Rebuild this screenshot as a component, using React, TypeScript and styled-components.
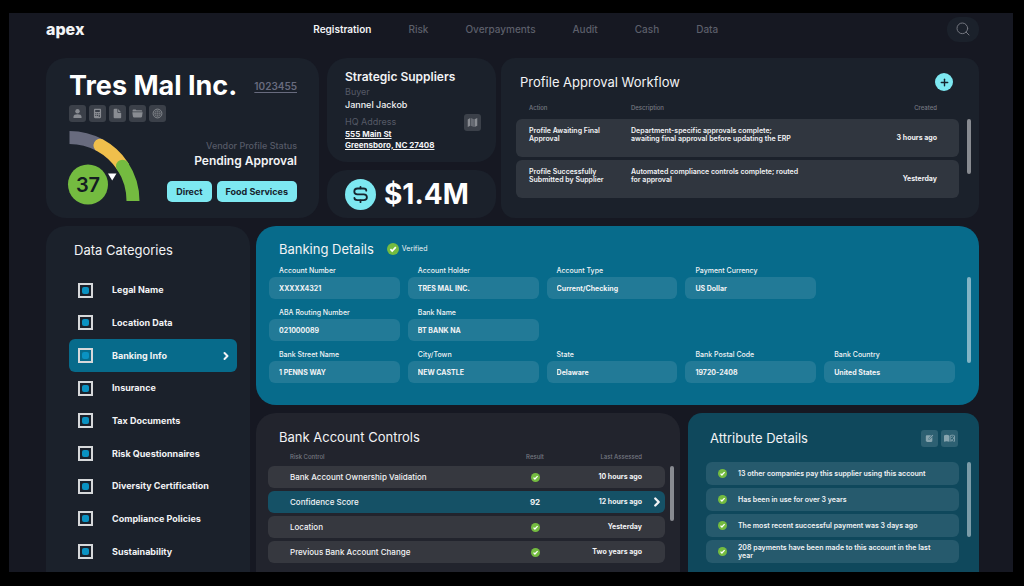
import React from "react";
import styled, { createGlobalStyle } from "styled-components";
import { ChevronRight, Plus, Search } from "lucide-react";

const color = {
  frame: "#161822",
  card: "#1b212b",
  cardAlt: "#22242d",
  row: "#30363f",
  rowAlt: "#36383f",
  teal: "#076b8b",
  tealField: "#227a97",
  tealDeep: "#0f485c",
  tealRow: "#265a6d",
  tealSelected: "#155166",
  cyan: "#7de8f1",
  green: "#74bb40",
  yellow: "#f0bf4c",
  slate: "#686b7e",
  muted: "#565a67",
  text: "#f2f3f5",
};

const GlobalStyle = createGlobalStyle`
  * { box-sizing: border-box; margin: 0; padding: 0; }
  body { background: #000; color: ${color.text}; font-family: Inter, "Liberation Sans", sans-serif; }
  button, input { font: inherit; color: inherit; border: 0; }
  button { cursor: pointer; }
  ul { list-style: none; }
  a { color: inherit; }
`;

const Screen = styled.div`
  height: 100vh;
  padding: 13px 11px 14px 9px;
`;

const Frame = styled.div`
  height: 100%;
  display: flex;
  flex-direction: column;
  overflow: hidden;
  padding: 0 34px 0 37px;
  background: ${color.frame};
`;

/* Header */

const Header = styled.header`
  display: flex;
  flex: none;
  align-items: center;
  justify-content: space-between;
  height: 45px;
  padding-bottom: 13px;
`;

const Logo = styled.a`
  font-size: 16px;
  line-height: 20px;
  font-weight: 800;
  text-decoration: none;
`;

const Nav = styled.nav`
  display: flex;
  gap: 37px;
`;

const NavLink = styled.a<{ $active?: boolean }>`
  font-size: 10px;
  line-height: 14px;
  font-weight: ${(p) => (p.$active ? 600 : 500)};
  color: ${(p) => (p.$active ? color.text : "#5c5f6a")};
  text-decoration: none;
`;

const SearchButton = styled.button`
  display: grid;
  place-items: center;
  width: 32px;
  height: 25px;
  border-radius: 12px;
  background: ${color.card};
  color: #73767f;
`;

/* Shared parts */

const Card = styled.section<{ $bg?: string; $radius?: number; $open?: boolean }>`
  background: ${(p) => p.$bg ?? color.card};
  border-radius: ${(p) => {
    const r = `${p.$radius ?? 20}px`;
    return p.$open ? `${r} ${r} 0 0` : r;
  }};
  min-width: 0;
`;

const CardTitle = styled.h2`
  font-size: 13px;
  line-height: 18px;
  font-weight: 400;
`;

const TitleBar = styled.div`
  display: flex;
  align-items: center;
  justify-content: space-between;
`;

const IconGroup = styled.div`
  display: flex;
  gap: 3px;
`;

const IconButton = styled.button<{ $bg?: string; $fg?: string }>`
  display: grid;
  place-items: center;
  width: 17px;
  height: 17px;
  border-radius: 3px;
  background: ${(p) => p.$bg ?? "#3b4049"};
  color: ${(p) => p.$fg ?? "#898c92"};
`;

const Scrollable = styled.div`
  display: flex;
  gap: 8px;
`;

const ScrollThumb = styled.div<{ $length: number; $top?: number; $bg?: string }>`
  flex: none;
  width: 4px;
  height: ${(p) => p.$length}px;
  margin-top: ${(p) => p.$top ?? 0}px;
  border-radius: 2px;
  background: ${(p) => p.$bg ?? "#888b91"};
`;

/* Top row */

const TopRow = styled.div`
  display: grid;
  flex: none;
  grid-template-columns: 273fr 652fr;
  gap: 8px;
  margin-bottom: 8px;
`;

const TopRight = styled.div`
  display: grid;
  grid-template-columns: 169fr 478fr;
  gap: 5px;
  min-width: 0;
`;

const VendorCard = styled(Card)`
  padding: 12px 22px 13px 23px;
`;

const VendorName = styled.h1`
  font-size: 27px;
  line-height: 32px;
  font-weight: 700;
  color: #fff;
`;

const VendorId = styled.a`
  font-size: 10px;
  line-height: 12px;
  font-weight: 600;
  color: ${color.slate};
  text-underline-offset: 2px;
`;

const VendorIcons = styled(IconGroup)`
  margin: 3px 0 9px;
`;

const VendorBottom = styled.div`
  display: flex;
  align-items: flex-end;
  justify-content: space-between;
`;

const Gauge = styled.svg`
  display: block;
  overflow: visible;
`;

const StatusBlock = styled.div`
  padding-bottom: 3px;
  text-align: right;
`;

const StatusLabel = styled.p`
  font-size: 9px;
  line-height: 12px;
  font-weight: 500;
  color: ${color.muted};
`;

const StatusValue = styled.p`
  margin-bottom: 12px;
  font-size: 12px;
  line-height: 17px;
  font-weight: 600;
`;

const TagRow = styled.div`
  display: flex;
  justify-content: flex-end;
  gap: 5px;
`;

const Tag = styled.button`
  height: 21px;
  padding: 0 9px;
  border-radius: 5px;
  background: ${color.cyan};
  color: #16232d;
  font-size: 9px;
  font-weight: 700;
`;

const SupplierColumn = styled.div`
  display: grid;
  grid-template-rows: 1fr 48px;
  gap: 8px;
  min-width: 0;
`;

const SupplierCard = styled(Card)`
  padding: 10px 15px 8px 18px;
`;

const SupplierTitle = styled.h2`
  font-size: 12px;
  line-height: 17px;
  font-weight: 600;
`;

const SupplierLabel = styled.p`
  font-size: 9px;
  line-height: 14px;
  color: ${color.muted};
`;

const SupplierValue = styled.p`
  margin-bottom: 4px;
  font-size: 9px;
  line-height: 12px;
  font-weight: 500;
`;

const Address = styled.a`
  display: block;
  font-size: 8px;
  line-height: 11px;
  font-weight: 700;
  text-underline-offset: 1px;
`;

const AddressHead = styled.div`
  display: flex;
  align-items: center;
  justify-content: space-between;
  height: 14px;
`;

const SpendCard = styled(Card)`
  display: flex;
  align-items: center;
  gap: 8px;
  padding-left: 18px;
`;

const Spend = styled.p`
  font-size: 28px;
  line-height: 32px;
  font-weight: 700;
  color: #fff;
`;

const WorkflowCard = styled(Card)`
  padding: 15px 8px 12px 15px;
`;

const WorkflowBar = styled(TitleBar)`
  padding: 0 18px 0 4px;
`;

const AddButton = styled.button`
  display: grid;
  place-items: center;
  width: 18px;
  height: 18px;
  border-radius: 50%;
  background: ${color.cyan};
  color: #16232d;
`;

const DataTable = styled.table`
  flex: 1;
  width: 100%;
  border-collapse: separate;
  border-spacing: 0 3px;
  table-layout: fixed;
  text-align: left;

  th {
    font-size: 6px;
    line-height: 8px;
    font-weight: 500;
    color: #767982;
  }
`;

const WorkflowTable = styled(DataTable)`
  th { height: 22px; padding-bottom: 4px; vertical-align: bottom; }
  th:first-child, td:first-child { width: 115px; padding-left: 13px; }
  th:last-child, td:last-child { width: 110px; padding-right: 22px; text-align: right; }
  td {
    height: 38px;
    padding-top: 8px;
    vertical-align: top;
    background: ${color.row};
    font-size: 7px;
    line-height: 8px;
    font-weight: 600;
  }
  td:first-child { border-radius: 6px 0 0 6px; }
  td:last-child { padding-top: 0; vertical-align: middle; border-radius: 0 6px 6px 0; font-weight: 700; }
`;

/* Lower area */

const LowerRow = styled.div`
  display: grid;
  flex: 1;
  grid-template-columns: 204fr 723fr;
  gap: 6px;
  min-height: 0;
`;

const Sidebar = styled(Card)`
  display: flex;
  flex-direction: column;
  padding: 15px 13px 4px 23px;
`;

const SidebarTitle = styled(CardTitle)`
  margin: 0 0 15px 5px;
`;

const CategoryList = styled.ul`
  display: grid;
  flex: 1;
  grid-auto-rows: minmax(32px, 1fr);
`;

const Category = styled.li<{ $selected: boolean }>`
  display: flex;
  border-radius: 6px;
  background: ${(p) => (p.$selected ? color.teal : "transparent")};
`;

const CategoryLabel = styled.label`
  display: flex;
  flex: 1;
  align-items: center;
  gap: 19px;
  padding: 0 5px 0 9px;
  font-size: 9px;
  line-height: 12px;
  font-weight: 700;

  svg { margin-left: auto; }
`;

const Checkbox = styled.input`
  appearance: none;
  display: grid;
  place-items: center;
  width: 15px;
  height: 15px;
  border: 2px solid #d6d8da;

  &:checked::before {
    content: "";
    width: 7px;
    height: 7px;
    border-radius: 2px;
    background: #0a92c2;
  }
`;

const Panels = styled.div`
  display: flex;
  flex-direction: column;
  gap: 8px;
  min-width: 0;
  min-height: 0;
`;

const BankingCard = styled(Card)`
  padding: 14px 8px 22px 13px;
`;

const BankingBar = styled.div`
  display: flex;
  align-items: center;
  gap: 13px;
  padding-left: 10px;
`;

const Verified = styled.span`
  display: flex;
  align-items: center;
  gap: 3px;
  font-size: 7px;
  line-height: 12px;
`;

const BankingBody = styled(Scrollable)`
  gap: 12px;
  padding-top: 6px;
`;

const FieldGrid = styled.div`
  display: grid;
  flex: 1;
  grid-template-columns: repeat(5, 1fr);
  gap: 7px 8px;
`;

const Field = styled.label<{ $column: number; $row: number }>`
  grid-column: ${(p) => p.$column};
  grid-row: ${(p) => p.$row};
  min-width: 0;
`;

const FieldLabel = styled.span`
  display: block;
  padding-left: 10px;
  font-size: 7px;
  line-height: 13px;
  font-weight: 500;
`;

const FieldInput = styled.input`
  display: block;
  width: 100%;
  height: 22px;
  padding: 0 10px;
  border-radius: 6px;
  background: ${color.tealField};
  font-size: 7px;
  font-weight: 700;
`;

const BottomPanels = styled.div`
  display: grid;
  flex: 1;
  grid-template-columns: 424fr 291fr;
  gap: 8px;
  min-height: 0;
`;

const ControlsCard = styled(Card)`
  padding: 15px 6px 0 12px;
`;

const ControlsTitle = styled(CardTitle)`
  padding-left: 11px;
`;

const ControlsBody = styled(Scrollable)`
  gap: 5px;
`;

const ControlsTable = styled(DataTable)`
  th { height: 14px; vertical-align: bottom; padding-bottom: 2px; }
  td { height: 22px; background: ${color.rowAlt}; font-size: 8px; line-height: 10px; font-weight: 500; }
  tr.selected td { background: ${color.tealSelected}; }
  th:first-child, td:first-child { padding-left: 22px; }
  th:nth-child(2), td:nth-child(2) { width: 60px; text-align: center; }
  td:nth-child(2) { font-weight: 700; }
  th:nth-child(3), td:nth-child(3) { width: 77px; text-align: right; }
  td:nth-child(3) { font-size: 7px; font-weight: 700; }
  th:last-child, td:last-child { width: 23px; padding-left: 6px; }
  td:first-child { border-radius: 6px 0 0 6px; }
  td:last-child { border-radius: 0 6px 6px 0; }
  td svg { display: block; margin: 0 auto; }
`;

const RowButton = styled.button`
  display: block;
  width: 100%;
  background: none;
`;

const AttributesCard = styled(Card)`
  padding: 16px 8px 0 18px;
`;

const AttributesBar = styled(TitleBar)`
  margin-bottom: 15px;
  padding: 0 13px 0 4px;
`;

const AttributeList = styled.ul`
  display: flex;
  flex: 1;
  flex-direction: column;
  gap: 3px;
`;

const Attribute = styled.li`
  display: flex;
  align-items: center;
  gap: 11px;
  height: 23px;
  padding: 0 12px;
  border-radius: 6px;
  background: ${color.tealRow};
  font-size: 7px;
  line-height: 8px;
  font-weight: 600;

  svg { flex: none; }
`;

const AttributeText = styled.span`
  max-width: 208px;
`;

/* Glyphs */

const glyphs: Record<string, React.ReactNode> = {
  person: (
    <>
      <circle cx="6" cy="3.6" r="2.4" />
      <path d="M1.6 10.8V9.6C1.6 7.8 3.4 6.9 6 6.9s4.4.9 4.4 2.7v1.2z" />
    </>
  ),
  calculator: (
    <path
      fillRule="evenodd"
      d="M3.4.8h5.2c.8 0 1.3.5 1.3 1.3v7.8c0 .8-.5 1.3-1.3 1.3H3.4c-.8 0-1.3-.5-1.3-1.3V2.1c0-.8.5-1.3 1.3-1.3zM3.5 2.2v2.200h5V2.200zM3.600 5.800v1h1.100v-1zm1.900 0v1h1.100v-1zm1.900 0v1h1.100v-1zM3.600 7.700v1h1.100v-1zm1.900 0v1h1.100v-1zm1.900 0v2.200h1.100V7.700z"
    />
  ),
  file: (
    <>
      <path d="M3 .8h2.900v3.500c0 .7.4 1.100 1.100 1.100h3v4.600c0 .8-.4 1.200-1.200 1.200H3c-.8 0-1.200-.4-1.200-1.200V2C1.800 1.200 2.200.8 3 .8z" />
      <path d="M6.700 1l3.100 3.500H7.200c-.3 0-.5-.2-.5-.5z" />
    </>
  ),
  folder: (
    <>
      <path d="M.6 3.700V2.600c0-.6.4-1 1-1h2.300l1 .9h5.300c.6 0 1 .4 1 1v.2z" />
      <path d="M.4 4.500h11.200l-.6 4.900c-.1.600-.5.900-1 .9H2c-.6 0-.9-.3-1-.9z" />
    </>
  ),
  globe: (
    <>
      <circle cx="6" cy="6" r="4.800" fill="none" stroke="currentColor" />
      <circle cx="6" cy="6" r="3.500" opacity=".7" />
      <path d="M4.800 2.500v7M7.200 2.500v7M2.500 4.800h7M2.500 7.200h7" stroke="#3b4049" strokeWidth=".5" />
    </>
  ),
  map: (
    <>
      <path d="M.8 2.600L3.500 1v8.600L.8 11z" />
      <path d="M4.200 1l3.300 1.500V11L4.200 9.600z" opacity=".6" />
      <path d="M8.200 2.500L11.200 1v8.500L8.200 11z" />
    </>
  ),
  edit: (
    <>
      <path d="M2.700 1.800h5.500L5 5.300l-.5 2.300 2.300-.5 3-3.100v5c0 1-.6 1.600-1.600 1.600H2.700c-1 0-1.600-.6-1.600-1.600V3.400c0-1 .6-1.600 1.600-1.600z" />
      <path d="M9.900.9l1.100 1.100-4.700 4.700-1.300.3.300-1.400z" />
    </>
  ),
  book: (
    <>
      <path d="M0 2.600c1.900-1 3.900-1 5.700 0v7c-1.800-.8-3.800-.8-5.700 0z" />
      <path
        d="M6.700 9.400V3c1.600-.8 3.200-.8 4.800 0v6.400M8 5.200l1.200-1.200 1.200 1.200v1.100L9 7.400l1.200 2M8 7v2.200"
        fill="none"
        stroke="currentColor"
        strokeWidth="1"
      />
    </>
  ),
};

const Glyph = ({ name, size = 11 }: { name: string; size?: number }) => (
  <svg width={size} height={size} viewBox="0 0 12 12" fill="currentColor" aria-hidden="true">
    {glyphs[name]}
  </svg>
);

const Tick = ({ size }: { size: number }) => (
  <svg width={size} height={size} viewBox="0 0 12 12" role="img" aria-label="Passed">
    <circle cx="6" cy="6" r="6" fill={color.green} />
    <path d="M3.400 6.200l1.800 1.800 3.600-3.800" fill="none" stroke="#fff" strokeWidth="1.700" />
  </svg>
);

const DollarCoin = () => (
  <svg width="31" height="31" viewBox="0 0 31 31" aria-hidden="true">
    <circle cx="15.500" cy="15.500" r="15.500" fill={color.cyan} />
    <g fill="none" stroke="#16232d" strokeWidth="1.800" strokeLinecap="round">
      <path d="M21.300 11.700c0-1.500-1.200-2.200-2.800-2.200h-6c-1.900 0-3.200 1.200-3.200 2.900s1.300 2.900 3.200 2.900h6.200c1.900 0 3.200 1.200 3.200 2.900s-1.300 2.900-3.200 2.900h-6.400c-1.700 0-2.900-.8-2.900-2.300" />
      <path d="M15.500 7.800v1.500M15.500 21.300v1.900" />
    </g>
  </svg>
);

const ScoreGauge = () => (
  <Gauge width="72" height="74" viewBox="0 0 72 74" role="img" aria-label="Vendor score">
    <g fill="none" strokeWidth="13">
      <path d="M.5 6.500A63.500 63.500 0 0 1 31 14.300" stroke={color.slate} />
      <path d="M31 14.300A63.500 63.500 0 0 1 53.500 35" stroke={color.yellow} strokeLinecap="round" />
      <path d="M64 70A63.500 63.500 0 0 0 53.500 35" stroke={color.green} />
    </g>
    <circle cx="53.500" cy="35.200" r="6.500" fill={color.green} />
    <circle cx="19" cy="53.500" r="20" fill={color.green} />
    <path d="M39 42.500h8.500L43.200 49.500z" fill="#fff" />
    <text x="19" y="61" textAnchor="middle" fontSize="20" fontWeight="600" fill="#141d22">
      37
    </text>
  </Gauge>
);

/* Data */

const navItems = ["Registration", "Risk", "Overpayments", "Audit", "Cash", "Data"];

const vendorActions = [
  ["person", "Contacts"],
  ["calculator", "Calculator"],
  ["file", "Documents"],
  ["folder", "Folders"],
  ["globe", "Website"],
];

const workflow = [
  {
    action: ["Profile Awaiting Final", "Approval"],
    description: ["Department-specific approvals complete;", "awaiting final approval before updating the ERP"],
    created: "3 hours ago",
  },
  {
    action: ["Profile Successfully", "Submitted by Supplier"],
    description: ["Automated compliance controls complete; routed", "for approval"],
    created: "Yesterday",
  },
];

const categories = [
  "Legal Name",
  "Location Data",
  "Banking Info",
  "Insurance",
  "Tax Documents",
  "Risk Questionnaires",
  "Diversity Certification",
  "Compliance Policies",
  "Sustainability",
];

const fields = [
  { label: "Account Number", value: "XXXXX4321", column: 1, row: 1 },
  { label: "Account Holder", value: "TRES MAL INC.", column: 2, row: 1 },
  { label: "Account Type", value: "Current/Checking", column: 3, row: 1 },
  { label: "Payment Currency", value: "US Dollar", column: 4, row: 1 },
  { label: "ABA Routing Number", value: "021000089", column: 1, row: 2 },
  { label: "Bank Name", value: "BT BANK NA", column: 2, row: 2 },
  { label: "Bank Street Name", value: "1 PENNS WAY", column: 1, row: 3 },
  { label: "City/Town", value: "NEW CASTLE", column: 2, row: 3 },
  { label: "State", value: "Delaware", column: 3, row: 3 },
  { label: "Bank Postal Code", value: "19720-2408", column: 4, row: 3 },
  { label: "Bank Country", value: "United States", column: 5, row: 3 },
];

const controls = [
  { name: "Bank Account Ownership Validation", assessed: "10 hours ago" },
  { name: "Confidence Score", score: 92, assessed: "12 hours ago" },
  { name: "Location", assessed: "Yesterday" },
  { name: "Previous Bank Account Change", assessed: "Two years ago" },
];

const attributes = [
  "13 other companies pay this supplier using this account",
  "Has been in use for over 3 years",
  "The most recent successful payment was 3 days ago",
  "208 payments have been made to this account in the last year",
];

const Lines = ({ lines }: { lines: string[] }) => (
  <>
    {lines.map((line, i) => (
      <React.Fragment key={line}>
        {i > 0 && <br />}
        {line}
      </React.Fragment>
    ))}
  </>
);

export default function App() {
  return (
    <Screen>
      <GlobalStyle />
      <Frame>
        <Header>
          <Logo href="#">apex</Logo>
          <Nav>
            {navItems.map((item, i) => (
              <NavLink key={item} href="#" $active={i === 0}>
                {item}
              </NavLink>
            ))}
          </Nav>
          <SearchButton aria-label="Search">
            <Search size={16} strokeWidth={1.5} />
          </SearchButton>
        </Header>

        <TopRow>
          <VendorCard>
            <TitleBar>
              <VendorName>Tres Mal Inc.</VendorName>
              <VendorId href="#">1023455</VendorId>
            </TitleBar>
            <VendorIcons>
              {vendorActions.map(([name, label]) => (
                <IconButton key={name} aria-label={label}>
                  <Glyph name={name} />
                </IconButton>
              ))}
            </VendorIcons>
            <VendorBottom>
              <ScoreGauge />
              <StatusBlock>
                <StatusLabel>Vendor Profile Status</StatusLabel>
                <StatusValue>Pending Approval</StatusValue>
                <TagRow>
                  <Tag>Direct</Tag>
                  <Tag>Food Services</Tag>
                </TagRow>
              </StatusBlock>
            </VendorBottom>
          </VendorCard>

          <TopRight>
            <SupplierColumn>
              <SupplierCard>
                <SupplierTitle>Strategic Suppliers</SupplierTitle>
                <SupplierLabel>Buyer</SupplierLabel>
                <SupplierValue>Jannel Jackob</SupplierValue>
                <AddressHead>
                  <SupplierLabel>HQ Address</SupplierLabel>
                  <IconButton aria-label="Show on map">
                    <Glyph name="map" />
                  </IconButton>
                </AddressHead>
                <Address href="#">
                  <Lines lines={["555 Main St", "Greensboro, NC 27408"]} />
                </Address>
              </SupplierCard>
              <SpendCard>
                <DollarCoin />
                <Spend>$1.4M</Spend>
              </SpendCard>
            </SupplierColumn>

            <WorkflowCard $radius={14}>
              <WorkflowBar>
                <CardTitle>Profile Approval Workflow</CardTitle>
                <AddButton aria-label="Add workflow step">
                  <Plus size={11} strokeWidth={3} />
                </AddButton>
              </WorkflowBar>
              <Scrollable>
                <WorkflowTable>
                  <thead>
                    <tr>
                      <th>Action</th>
                      <th>Description</th>
                      <th>Created</th>
                    </tr>
                  </thead>
                  <tbody>
                    {workflow.map((step) => (
                      <tr key={step.created}>
                        <td><Lines lines={step.action} /></td>
                        <td><Lines lines={step.description} /></td>
                        <td>{step.created}</td>
                      </tr>
                    ))}
                  </tbody>
                </WorkflowTable>
                <ScrollThumb $length={55} $top={28} />
              </Scrollable>
            </WorkflowCard>
          </TopRight>
        </TopRow>

        <LowerRow>
          <Sidebar $open>
            <SidebarTitle>Data Categories</SidebarTitle>
            <CategoryList>
              {categories.map((name) => {
                const selected = name === "Banking Info";
                return (
                  <Category key={name} $selected={selected}>
                    <CategoryLabel>
                      <Checkbox type="checkbox" defaultChecked />
                      {name}
                      {selected && <ChevronRight size={12} strokeWidth={4} />}
                    </CategoryLabel>
                  </Category>
                );
              })}
            </CategoryList>
          </Sidebar>

          <Panels>
            <BankingCard $bg={color.teal}>
              <BankingBar>
                <CardTitle>Banking Details</CardTitle>
                <Verified>
                  <Tick size={12} />
                  Verified
                </Verified>
              </BankingBar>
              <BankingBody>
                <FieldGrid>
                  {fields.map((f) => (
                    <Field key={f.label} $column={f.column} $row={f.row}>
                      <FieldLabel>{f.label}</FieldLabel>
                      <FieldInput readOnly value={f.value} />
                    </Field>
                  ))}
                </FieldGrid>
                <ScrollThumb $length={86} $top={13} $bg="#83b4c5" />
              </BankingBody>
            </BankingCard>

            <BottomPanels>
              <ControlsCard $bg={color.cardAlt} $open>
                <ControlsTitle>Bank Account Controls</ControlsTitle>
                <ControlsBody>
                  <ControlsTable>
                    <thead>
                      <tr>
                        <th>Risk Control</th>
                        <th>Result</th>
                        <th>Last Assessed</th>
                        <th aria-label="Open" />
                      </tr>
                    </thead>
                    <tbody>
                      {controls.map((c) => (
                        <tr key={c.name} className={c.score ? "selected" : undefined}>
                          <td>{c.name}</td>
                          <td>{c.score ?? <Tick size={9} />}</td>
                          <td>{c.assessed}</td>
                          <td>
                            {c.score && (
                              <RowButton aria-label="Open control">
                                <ChevronRight size={14} strokeWidth={4} />
                              </RowButton>
                            )}
                          </td>
                        </tr>
                      ))}
                    </tbody>
                  </ControlsTable>
                  <ScrollThumb $length={55} $top={20} />
                </ControlsBody>
              </ControlsCard>

              <AttributesCard $bg={color.tealDeep} $radius={14} $open>
                <AttributesBar>
                  <CardTitle>Attribute Details</CardTitle>
                  <IconGroup>
                    <IconButton aria-label="Edit" $bg="#2d6072" $fg="#87a4ae">
                      <Glyph name="edit" size={9} />
                    </IconButton>
                    <IconButton aria-label="Reference" $bg="#2d6072" $fg="#87a4ae">
                      <Glyph name="book" />
                    </IconButton>
                  </IconGroup>
                </AttributesBar>
                <Scrollable>
                  <AttributeList>
                    {attributes.map((text) => (
                      <Attribute key={text}>
                        <Tick size={9} />
                        <AttributeText>{text}</AttributeText>
                      </Attribute>
                    ))}
                  </AttributeList>
                  <ScrollThumb $length={75} $bg="#7b9ca8" />
                </Scrollable>
              </AttributesCard>
            </BottomPanels>
          </Panels>
        </LowerRow>
      </Frame>
    </Screen>
  );
}
